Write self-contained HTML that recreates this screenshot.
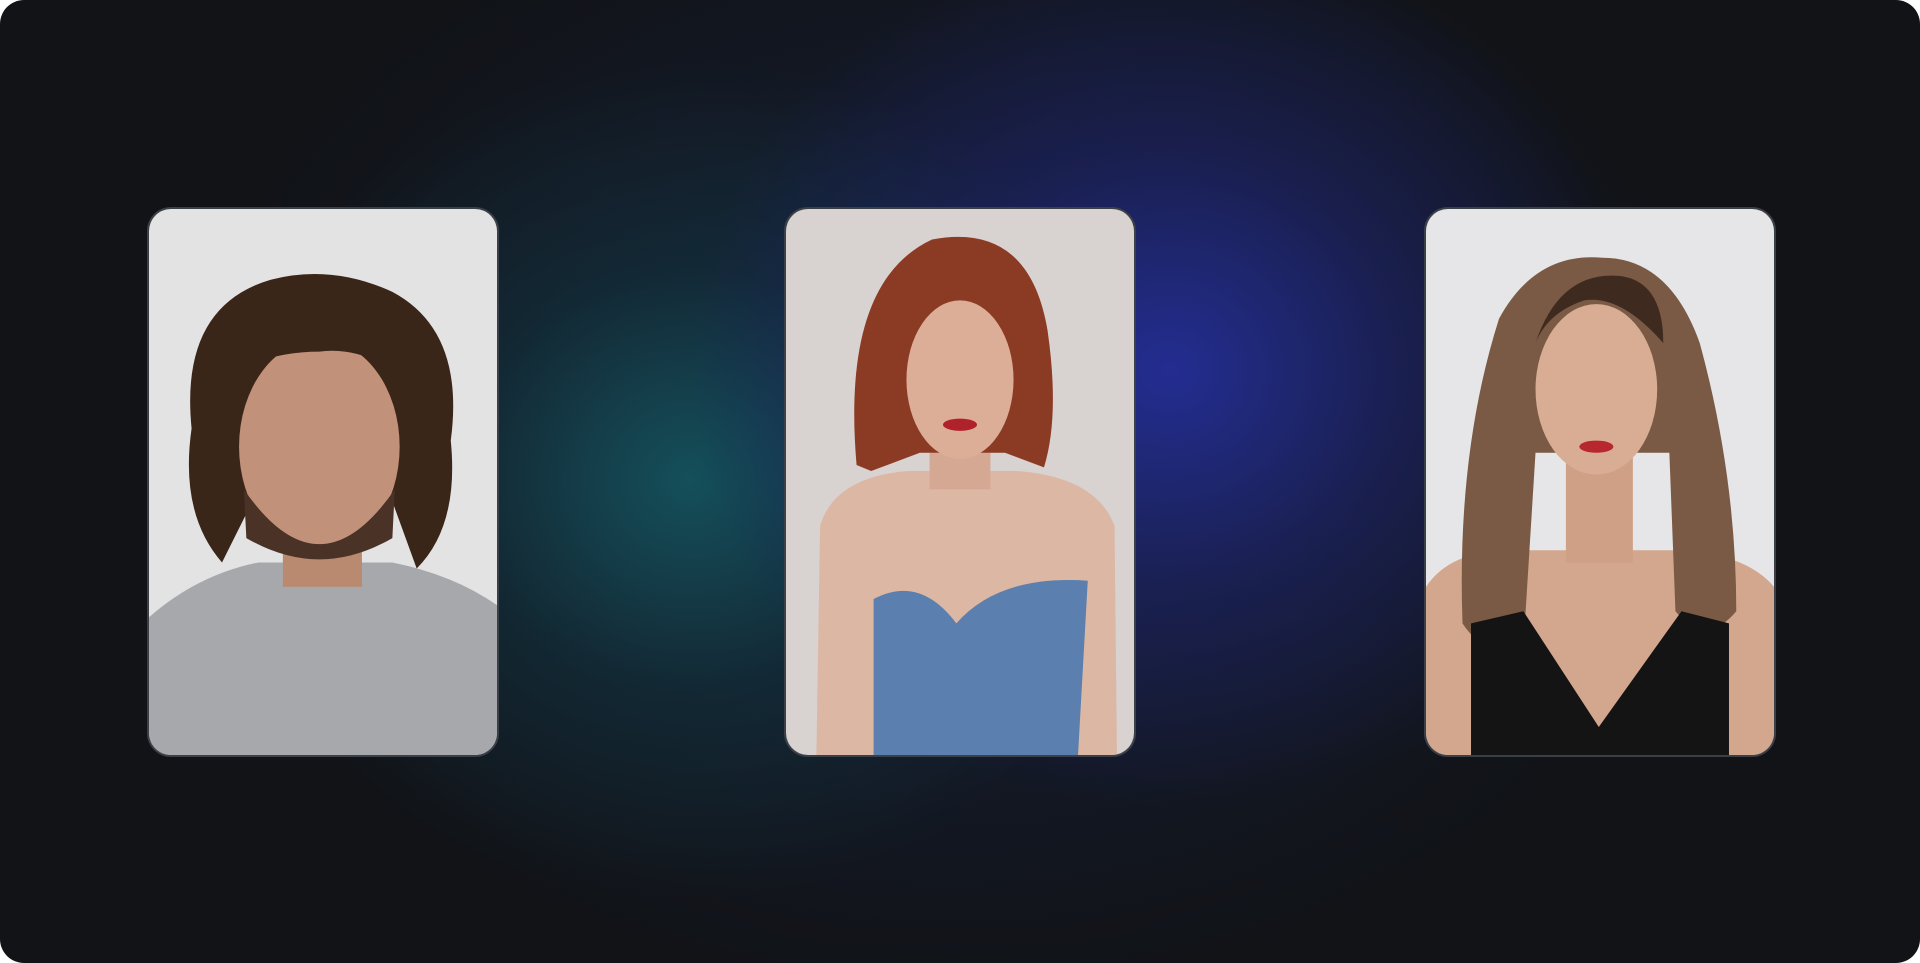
<!DOCTYPE html>
<html><head><meta charset="utf-8"><style>
html,body{margin:0;padding:0;width:1920px;height:963px;background:#fff;overflow:hidden}
.bg{position:absolute;left:0;top:0;width:1920px;height:963px;border-radius:24px;background:
radial-gradient(ellipse 480px 440px at 1170px 370px,rgba(36,46,150,0.95),rgba(30,36,110,0.55) 50%,rgba(20,22,40,0) 100%),
radial-gradient(ellipse 460px 420px at 690px 480px,rgba(20,85,95,0.9),rgba(18,55,65,0.5) 50%,rgba(17,19,23,0) 100%),
radial-gradient(ellipse 760px 560px at 950px 430px,rgba(25,40,80,0.6),rgba(17,19,23,0) 100%),#111317;overflow:hidden}
.card{position:absolute;top:207px;width:348px;height:546px;border:2px solid #3b3f47;border-radius:24px;overflow:hidden}
.card svg{display:block;width:100%;height:100%}
</style></head><body>
<div class="bg">
<div class="card" style="left:147px">
<svg viewBox="0 0 286 448" preserveAspectRatio="none">
<rect width="286" height="448" fill="#e3e3e4"/>
<path d="M0 335 Q40 300 90 290 L200 290 Q250 300 286 325 L286 448 L0 448Z" fill="#a7a8ab"/>
<rect x="110" y="250" width="65" height="60" fill="#b98a70"/>
<path d="M35 180 Q25 80 100 58 Q150 45 200 68 Q260 100 248 190 Q255 260 220 295 L200 240 L85 240 L60 290 Q25 250 35 180Z" fill="#3a2519"/>
<ellipse cx="140" cy="195" rx="66" ry="88" fill="#c2917a"/>
<path d="M78 230 Q140 320 202 230 L200 270 Q140 305 80 270Z" fill="#4a3226"/>
<path d="M68 135 Q100 70 160 80 Q212 90 216 145 Q180 112 140 117 Q100 117 68 135Z" fill="#3a2519"/>
</svg></div>
<div class="card" style="left:784px">
<svg viewBox="0 0 286 448" preserveAspectRatio="none">
<rect width="286" height="448" fill="#d8d2d0"/>
<path d="M25 448 L28 260 Q40 220 100 215 L190 215 Q255 220 270 260 L272 448Z" fill="#dcb7a4"/>
<rect x="118" y="180" width="50" height="50" fill="#d5a893"/>
<path d="M58 210 Q45 60 120 25 Q200 10 215 100 Q225 170 212 212 L180 200 L110 200 L70 215Z" fill="#8b3a23"/>
<ellipse cx="143" cy="140" rx="44" ry="65" fill="#dcae98"/>
<path d="M100 100 Q130 40 190 95 Q165 60 140 62 Q110 65 100 100Z" fill="#8b3a23"/>
<path d="M72 320 Q110 300 140 340 Q175 300 248 305 L240 448 L72 448Z" fill="#5b7fae"/>
<ellipse cx="143" cy="177" rx="14" ry="5" fill="#b0222a"/>
</svg></div>
<div class="card" style="left:1424px">
<svg viewBox="0 0 286 448" preserveAspectRatio="none">
<rect width="286" height="448" fill="#e6e6e8"/>
<path d="M0 448 L0 310 Q20 280 70 280 L215 280 Q265 285 286 310 L286 448Z" fill="#d3a68e"/>
<rect x="115" y="200" width="55" height="90" fill="#cf9f86"/>
<path d="M30 340 Q25 200 60 90 Q90 35 145 40 Q200 40 225 110 Q255 220 255 330 Q230 360 205 330 L200 200 L90 200 L80 360 Q50 370 30 340Z" fill="#7a5a44"/>
<ellipse cx="140" cy="148" rx="50" ry="70" fill="#d8ad94"/>
<path d="M90 110 Q110 50 160 55 Q195 60 195 110 Q160 70 130 75 Q100 85 90 110Z" fill="#3e2a1e"/>
<path d="M37 340 L80 330 L142 425 L210 330 L249 340 L249 448 L37 448Z" fill="#141414"/>
<ellipse cx="140" cy="195" rx="14" ry="5" fill="#b8262e"/>
</svg></div>
</div>
</body></html>
